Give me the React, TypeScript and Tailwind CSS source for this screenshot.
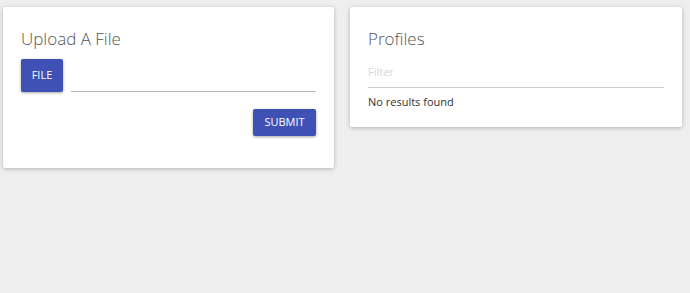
import React from 'react';

const App: React.FC = () => {
  return (
    <div className="min-h-[293px] w-[690px] bg-[#eeeeee] font-['Open_Sans',sans-serif]">
      <div className="flex items-start gap-4 px-[3px] pt-[7px]">
        {/* Upload card */}
        <div className="w-[331px] h-[161px] bg-white shadow-[0_1px_4px_rgba(0,0,0,0.25)] rounded-[2px] px-[18px] pt-[20px]">
          <h2 className="text-[17px] font-light text-[#555] leading-[24px]">Upload A File</h2>
          <div className="mt-[8px] flex items-end gap-2">
            <button className="w-[42px] h-[33px] bg-[#3f51b5] text-white text-[11px] font-medium rounded-[2px] shadow-[0_1px_3px_rgba(0,0,0,0.35)]">
              FILE
            </button>
            <div className="flex-1 border-b border-[#b5b5b5] h-[33px]" />
          </div>
          <div className="mt-[17px] flex justify-end">
            <button className="w-[63px] h-[27px] bg-[#3f51b5] text-white text-[11px] font-medium rounded-[2px] shadow-[0_1px_3px_rgba(0,0,0,0.35)]">
              SUBMIT
            </button>
          </div>
        </div>

        {/* Profiles card */}
        <div className="w-[332px] h-[120px] bg-white shadow-[0_1px_4px_rgba(0,0,0,0.25)] rounded-[2px] px-[18px] pt-[20px]">
          <h2 className="text-[17px] font-light text-[#555] leading-[24px]">Profiles</h2>
          <div className="mt-[7px] border-b border-[#cfcfcf] pb-[5px]">
            <span className="text-[11px] text-[#d8d8d8]">Filter</span>
          </div>
          <p className="mt-[6px] text-[11px] text-[#333]">No results found</p>
        </div>
      </div>
    </div>
  );
};

export default App;
